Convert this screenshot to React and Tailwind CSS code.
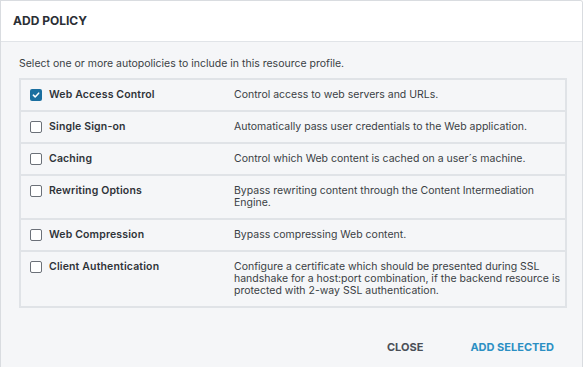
const policies = [
  { name: 'Web Access Control', desc: 'Control access to web servers and URLs.', checked: true },
  { name: 'Single Sign-on', desc: 'Automatically pass user credentials to the Web application.' },
  { name: 'Caching', desc: 'Control which Web content is cached on a user´s machine.' },
  { name: 'Rewriting Options', desc: 'Bypass rewriting content through the Content Intermediation Engine.' },
  { name: 'Web Compression', desc: 'Bypass compressing Web content.' },
  {
    name: 'Client Authentication',
    desc: 'Configure a certificate which should be presented during SSL handshake for a host:port combination, if the backend resource is protected with 2-way SSL authentication.',
  },
]

function Checkbox({ checked }) {
  if (checked) {
    return (
      <span className="flex h-[12px] w-[12px] items-center justify-center rounded-[2px] bg-[#1b6fa0]">
        <svg viewBox="0 0 12 12" className="h-[10px] w-[10px]" fill="none" stroke="white" strokeWidth="1.8" strokeLinecap="round" strokeLinejoin="round">
          <path d="M2.8 6.2 5 8.3 9.2 3.8" />
        </svg>
      </span>
    )
  }
  return <span className="block h-[12px] w-[12px] rounded-[2px] border border-[#6b7078] bg-white" />
}

export default function App() {
  return (
    <div className="h-[367px] w-[583px] bg-white font-['Inter',sans-serif] text-[#33373d]">
      <div className="flex h-full flex-col overflow-hidden rounded-tr-[3px] border-l border-t border-r border-[#d9dce0]">
        <div className="flex h-[41px] shrink-0 items-center border-b border-[#e1e4e8] bg-white pl-[12px]">
          <h1 className="text-[12px] font-bold text-[#2b2f35]">ADD POLICY</h1>
        </div>
        <div className="flex flex-1 flex-col bg-[#f5f6f8] pl-[18px] pr-[15px]">
          <p className="mt-[15px] text-[10.5px] leading-[13px] text-[#3a3e44]">
            Select one or more autopolicies to include in this resource profile.
          </p>
          <div className="mt-[8px] border-x-2 border-t-2 border-[#e0e3e7]">
            {policies.map((p) => (
              <div key={p.name} className="flex border-b-2 border-[#e0e3e7] py-[9px] text-[10.5px] leading-[12px]">
                <div className="flex w-[213px] shrink-0 items-start gap-[7px] pl-[9px]">
                  <Checkbox checked={p.checked} />
                  <span className="font-semibold tracking-[0.15px] text-[#2f3338]">{p.name}</span>
                </div>
                <div className="pr-[3px] text-[#3a3e44]">{p.desc}</div>
              </div>
            ))}
          </div>
          <div className="mt-[31px] flex justify-end gap-[47px] pr-[13px] text-[11px] font-bold">
            <button type="button" className="text-[#4a4f57]">CLOSE</button>
            <button type="button" className="text-[#2b8fc3]">ADD SELECTED</button>
          </div>
        </div>
      </div>
    </div>
  )
}
